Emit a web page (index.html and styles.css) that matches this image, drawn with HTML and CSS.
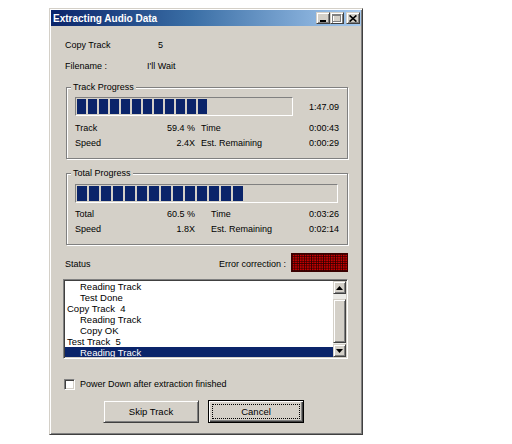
FILE: index.html
```html
<!DOCTYPE html>
<html>
<head>
<meta charset="utf-8">
<title>Extracting Audio Data</title>
<link rel="stylesheet" href="styles.css">
</head>
<body>
<div class="window">
  <div class="titlebar">
    <span class="title">Extracting Audio Data</span>
    <div class="caption-buttons">
      <span class="cbtn"><svg width="8" height="7" viewBox="0 0 8 7"><rect x="1" y="5" width="6" height="2" fill="#000"/></svg></span>
      <span class="cbtn"><svg width="10" height="9" viewBox="0 0 10 9"><rect x="1.5" y="1.5" width="8" height="7" fill="none" stroke="#fff"/><rect x="1" y="1" width="8" height="1" fill="#fff"/><rect x="0.5" y="0.5" width="8" height="7" fill="none" stroke="#808080"/><rect x="0" y="0" width="9" height="2" fill="#808080"/></svg></span>
      <span class="cbtn cbtn-close"><svg width="8" height="7" viewBox="0 0 8 7"><path d="M0.6 0.4 L7.4 6.6 M7.4 0.4 L0.6 6.6" stroke="#000" stroke-width="1.6" fill="none"/></svg></span>
    </div>
  </div>
  <div class="client">
    <div class="info">
      <span>Copy Track</span><span class="track-no">5</span>
      <span>Filename :</span><span>I'll Wait</span>
    </div>

    <div class="group group-track">
      <div class="legend">Track Progress</div>
      <div class="bar-row">
        <div class="bar bar-track"><div class="fill fill-track" style="width:130px"></div></div>
        <span class="bar-time">1:47.09</span>
      </div>
      <div class="stats stats-track">
        <span>Track</span><span class="num">59.4 %</span><span class="key2">Time</span><span class="num">0:00:43</span>
        <span>Speed</span><span class="num">2.4X</span><span class="key2">Est. Remaining</span><span class="num">0:00:29</span>
      </div>
    </div>

    <div class="group group-total">
      <div class="legend">Total Progress</div>
      <div class="bar-row">
        <div class="bar bar-total"><div class="fill fill-total" style="width:166px"></div></div>
      </div>
      <div class="stats stats-total">
        <span>Total</span><span class="num">60.5 %</span><span class="key2">Time</span><span class="num">0:03:26</span>
        <span>Speed</span><span class="num">1.8X</span><span class="key2">Est. Remaining</span><span class="num">0:02:14</span>
      </div>
    </div>

    <div class="status-row">
      <span class="status-text">Status</span>
      <div class="error-corr">
        <span class="status-text">Error correction :</span>
        <div class="led"></div>
      </div>
    </div>

    <div class="listbox">
      <div class="items">
        <div class="item">Reading Track</div>
        <div class="item">Test Done</div>
        <div class="item item-top">Copy Track&nbsp; 4</div>
        <div class="item">Reading Track</div>
        <div class="item">Copy OK</div>
        <div class="item item-top">Test Track&nbsp; 5</div>
        <div class="item item-sel">Reading Track</div>
      </div>
      <div class="scrollbar">
        <div class="sb-btn"><svg width="7" height="4" viewBox="0 0 7 4"><polygon points="3.5,0 7,4 0,4" fill="#000"/></svg></div>
        <div class="sb-track"><div class="sb-thumb"></div></div>
        <div class="sb-btn"><svg width="7" height="4" viewBox="0 0 7 4"><polygon points="0,0 7,0 3.5,4" fill="#000"/></svg></div>
      </div>
    </div>

    <div class="check-row">
      <span class="checkbox"></span>
      <span>Power Down after extraction finished</span>
    </div>

    <div class="buttons">
      <div class="btn">Skip Track</div>
      <div class="btn btn-default"><span class="focus">Cancel</span></div>
    </div>
  </div>
</div>
</body>
</html>
```

FILE: styles.css
```css
html, body {
  margin: 0;
  padding: 0;
  background: #ffffff;
}

body {
  font-family: "Liberation Sans", Arial, sans-serif;
  font-size: 9px;
  color: #000;
}

.window {
  margin: 8px 0 0 49px;
  width: 314px;
  height: 427px;
  box-sizing: border-box;
  background: #d4d0c8;
  border: 1px solid;
  border-color: #d4d0c8 #404040 #404040 #d4d0c8;
  box-shadow: inset 1px 1px 0 #ffffff, inset -1px -1px 0 #808080;
  padding: 1px;
  display: flex;
  flex-direction: column;
}

.titlebar {
  height: 16px;
  display: flex;
  align-items: center;
  justify-content: space-between;
  padding: 0 1px 0 2px;
  background: linear-gradient(90deg, #0a246a 0%, #3a6ea5 45%, #a6caf0 100%);
}

.title {
  color: #fff;
  font-weight: bold;
  font-size: 10px;
  white-space: nowrap;
}

.caption-buttons {
  display: flex;
  align-items: center;
}

.cbtn,
.sb-btn,
.sb-thumb,
.btn {
  box-sizing: border-box;
  background: #d4d0c8;
  border: 1px solid;
  border-color: #d4d0c8 #404040 #404040 #d4d0c8;
  box-shadow: inset 1px 1px 0 #ffffff, inset -1px -1px 0 #808080;
}

.cbtn {
  width: 14px;
  height: 12px;
  display: flex;
  align-items: center;
  justify-content: center;
}

.cbtn svg {
  display: block;
}

.cbtn-close {
  margin-left: 2px;
}

.client {
  flex: 1;
  padding: 8px 13px 0 15px;
  display: flex;
  flex-direction: column;
}

.info {
  display: grid;
  grid-template-columns: 82px 1fr;
  grid-auto-rows: 21px;
  align-items: center;
  margin-left: -1px;
}

.track-no {
  padding-left: 11px;
}

.group {
  border: 1px solid #808080;
  box-shadow: inset 1px 1px 0 #ffffff, 1px 1px 0 #ffffff;
  padding: 0 8px 8px 8px;
}

.group-track {
  margin-top: 11px;
}

.group-total {
  margin-top: 14px;
}

.legend {
  margin: -7px 0 0 -4px;
  height: 12px;
  line-height: 12px;
  padding: 0 2px;
  width: fit-content;
  background: #d4d0c8;
}

.bar-row {
  display: flex;
  align-items: center;
  justify-content: space-between;
  margin-top: 4px;
}

.group-total .bar-row {
  margin-top: 5px;
}

.bar {
  height: 19px;
  box-sizing: border-box;
  border: 1px solid;
  border-color: #808080 #ffffff #ffffff #808080;
  padding: 1px;
  background: #d4d0c8;
}

.bar-track {
  width: 218px;
}

.bar-total {
  width: 263px;
}

.fill {
  height: 100%;
}

.fill-track {
  background: repeating-linear-gradient(90deg, #0a246a 0 9px, transparent 9px 11px);
}

.fill-total {
  background: repeating-linear-gradient(90deg, #0a246a 0 10px, transparent 10px 12px);
}

.stats {
  display: grid;
  grid-template-columns: 60px 60px 1fr auto;
  grid-auto-rows: 15px;
  align-items: center;
  margin-top: 4px;
  white-space: nowrap;
}

.group-total .stats {
  margin-top: 3px;
}

.num {
  text-align: right;
}

.stats-track .key2 {
  padding-left: 6px;
}

.stats-total .key2 {
  padding-left: 16px;
}

.status-row {
  margin: 8px 0 0 -1px;
  height: 19px;
  display: flex;
  align-items: center;
  justify-content: space-between;
}

.status-text {
  padding-top: 3px;
}

.error-corr {
  display: flex;
  align-items: center;
  gap: 5px;
}

.led {
  width: 57px;
  height: 19px;
  box-sizing: border-box;
  border: 1px solid #3a0000;
  background-color: #c80000;
  background-image:
    linear-gradient(90deg, rgba(45, 0, 0, 0.9) 1px, transparent 1px),
    linear-gradient(180deg, rgba(45, 0, 0, 0.9) 1px, transparent 1px);
  background-size: 2.4px 100%, 100% 2.3px;
}

.listbox {
  margin: 7px 0 0 -3px;
  height: 80px;
  box-sizing: border-box;
  display: flex;
  border: 1px solid;
  border-color: #808080 #ffffff #ffffff #808080;
  box-shadow: inset 1px 1px 0 #404040, inset -1px -1px 0 #d4d0c8;
  padding: 1px;
  background: #ffffff;
}

.items {
  flex: 1;
  overflow: hidden;
  font-size: 9.5px;
  line-height: 11px;
}

.item {
  padding-left: 15px;
  white-space: nowrap;
}

.item-top {
  padding-left: 2px;
}

.item-sel {
  background: #0a246a;
  color: #ffffff;
}

.scrollbar {
  width: 13px;
  display: flex;
  flex-direction: column;
  background: #ecebe7;
}

.sb-btn {
  height: 13px;
  display: flex;
  align-items: center;
  justify-content: center;
}

.sb-btn svg {
  display: block;
}

.sb-track {
  flex: 1;
  padding-top: 5px;
}

.sb-thumb {
  height: 44px;
}

.check-row {
  margin: 19px 0 0 -2px;
  height: 12px;
  display: flex;
  align-items: center;
  gap: 5px;
}

.checkbox {
  width: 11px;
  height: 11px;
  box-sizing: border-box;
  border: 1px solid;
  border-color: #808080 #ffffff #ffffff #808080;
  box-shadow: inset 1px 1px 0 #404040, inset -1px -1px 0 #d4d0c8;
  background: #ffffff;
}

.buttons {
  margin-top: 10px;
  padding-left: 37px;
  display: flex;
  gap: 9px;
}

.btn {
  width: 96px;
  height: 23px;
  display: flex;
  align-items: center;
  justify-content: center;
  font-size: 9.5px;
}

.btn-default {
  border-color: #000000;
  box-shadow: inset 1px 1px 0 #ffffff, inset -1px -1px 0 #404040, inset -2px -2px 0 #808080;
  padding: 3px;
}

.focus {
  flex: 1;
  align-self: stretch;
  display: flex;
  align-items: center;
  justify-content: center;
  border: 1px dotted #000000;
}
```
